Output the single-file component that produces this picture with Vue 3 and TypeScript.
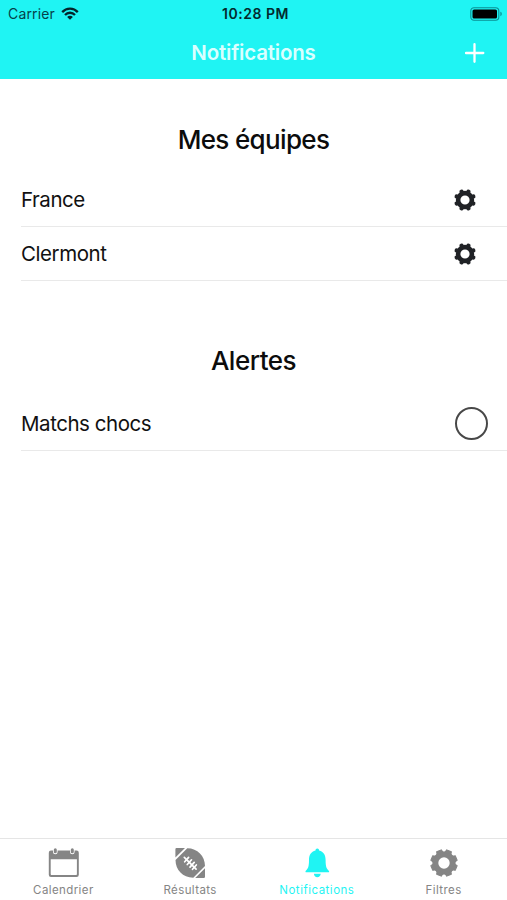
<script setup lang="ts">
interface Team { name: string }
interface Tab { id: string; label: string; active?: boolean }

const teams: Team[] = [{ name: 'France' }, { name: 'Clermont' }]
const tabs: Tab[] = [
  { id: 'calendar', label: 'Calendrier' },
  { id: 'results', label: 'Résultats' },
  { id: 'notifications', label: 'Notifications', active: true },
  { id: 'filters', label: 'Filtres' },
]
const teeth: number[] = [22.5, 67.5, 112.5, 157.5, 202.5, 247.5, 292.5, 337.5]
</script>

<template>
  <div class="screen">
    <header class="header">
      <div class="status">
        <div class="carrier">
          <span class="carrier-name">Carrier</span>
          <svg class="wifi" width="18" height="13" viewBox="0 0 18 13" fill="none" stroke="#03252b" stroke-width="2.3">
            <path d="M1.2 5.1C5.5.5 12.5.5 16.8 5.1" />
            <path d="M4 8c2.8-3 7.2-3 10 0" />
            <path d="M6.1 9.9c1.6-1.7 4.2-1.7 5.8 0L9 12.8z" fill="#03252b" stroke="none" />
          </svg>
        </div>
        <span class="time">10:28 PM</span>
        <svg class="battery" width="33" height="14" viewBox="0 0 33 14">
          <rect x=".8" y=".8" width="28" height="12.4" rx="3.2" fill="none" stroke="#0b8f94" stroke-width="1.1" />
          <rect x="2.5" y="2.5" width="24.5" height="9" rx="1.6" fill="#000" />
          <path d="M30.4 4.8c1.8.5 1.8 3.9 0 4.4z" fill="#0b8f94" />
        </svg>
      </div>
      <div class="navbar">
        <h1 class="title">Notifications</h1>
        <svg class="plus" width="20" height="20" viewBox="0 0 20 20" stroke="#fff" stroke-width="2.3" stroke-linecap="round">
          <path d="M9.500 1.200v17.600M.9 10h17.400" />
        </svg>
      </div>
    </header>

    <main class="content">
      <section class="group">
        <h2 class="heading teams-heading">Mes équipes</h2>
        <div v-for="team in teams" :key="team.name" class="row">
          <span class="label">{{ team.name }}</span>
          <svg class="gear" width="24" height="24" viewBox="-12 -12 24 24" stroke="#202226" fill="none">
            <circle r="6.9" stroke-width="4.6" />
            <path v-for="angle in teeth" :key="angle" d="M0-7.500v-1.500" :transform="`rotate(${angle})`" stroke-width="4.300" stroke-linecap="round" />
          </svg>
        </div>
      </section>
      <section class="group alerts">
        <h2 class="heading alerts-heading">Alertes</h2>
        <div class="row">
          <span class="label matchs">Matchs chocs</span>
          <span class="radio"></span>
        </div>
      </section>
    </main>

    <nav class="tabs">
      <div v-for="tab in tabs" :key="tab.id" class="tab" :class="[tab.id, { active: tab.active }]">
        <svg v-if="tab.id === 'calendar'" class="icon" width="32" height="32" viewBox="-.8 0 32 32">
          <path fill="currentColor" fill-rule="evenodd" d="M3.200 3.500h25.600q2.200 0 2.200 2.200v22.100q0 2.200-2.200 2.200H3.200Q1 30 1 27.800V5.700Q1 3.500 3.200 3.500zM2.900 12.300v14.600q0 1.200 1.200 1.200h23.800q1.200 0 1.200-1.200V12.300z" />
          <g stroke-linecap="round">
            <path d="M7.500 3.500v1.500M24.500 3.500v1.500" stroke="#fff" stroke-width="4.600" />
            <path d="M7.500 2.700v2M24.500 2.700v2" stroke="currentColor" stroke-width="3" />
          </g>
        </svg>
        <svg v-else-if="tab.id === 'results'" class="icon" width="32" height="32" viewBox="0 0 32 32">
          <path fill="currentColor" d="M2.500 1H11L1.400 10.600V2.200Q1.400 1 2.500 1zM13.300 1.200C23.500 1.200 31 9 31 19L19.300 30.700C9 30.800 1.500 23 1.500 13zM31 21.200v8.600q0 1.200-1.200 1.200h-8.600z" />
          <g stroke="#fff" stroke-width="1.700" stroke-linecap="round">
            <path d="M10.300 10.300l11.800 11.800" />
            <path d="M10.700 14.800l3.900-4.400M13.300 17.500l4.200-4.700M16 20.100l4.200-4.700M18.500 22.300l3.800-4.300" />
          </g>
        </svg>
        <svg v-else-if="tab.id === 'notifications'" class="icon" width="32" height="32" viewBox="0 0 32 32" fill="currentColor">
          <path d="M16.300 1.500c1.100 0 1.800.8 1.800 2 4.400 1 6.500 4.600 6.500 9.500 0 7 1 8.500 3.200 10.700.7.900.4 1.600-.7 1.600H5.500c-1.100 0-1.400-.7-.7-1.600C7 21.500 8 20 8 13c0-4.900 2.100-8.500 6.500-9.500 0-1.200.7-2 1.800-2z" />
          <path d="M12.900 26.700h6.800c-.2 2.100-1.500 3.600-3.400 3.600s-3.200-1.500-3.400-3.600z" />
        </svg>
        <svg v-else class="icon" width="32" height="32" viewBox="-16 -16 32 32" stroke="currentColor" fill="none">
          <circle r="8.600" stroke-width="5.800" />
          <path v-for="angle in teeth" :key="angle" fill="currentColor" d="M-3.700-10Q-2.800-11-2.500-13.200h5Q2.800-11 3.700-10z" :transform="`rotate(${angle})`" stroke-width="1" stroke-linejoin="round" />
        </svg>
        <span class="tab-label">{{ tab.label }}</span>
      </div>
    </nav>
  </div>
</template>

<style>
body { margin: 0; background: #fff; }
</style>

<style scoped>
.screen {
  display: flex;
  flex-direction: column;
  width: 507px;
  height: 900px;
  overflow: hidden;
  background: #fff;
  color: #111;
  font-family: Inter, "Liberation Sans", sans-serif;
}
.header { height: 79px; background: #1ff4f3; }
.status {
  display: grid;
  grid-template-columns: 1fr auto 1fr;
  align-items: center;
  box-sizing: border-box;
  height: 27px;
  padding: 0 4px 0 8px;
}
.carrier { display: flex; align-items: center; gap: 6px; }
.carrier-name { font-size: 14px; line-height: 18px; color: #06414a; letter-spacing: .15px; }
.time { font-size: 14px; font-weight: 600; line-height: 18px; color: #032a2e; letter-spacing: .5px; }
.battery { justify-self: end; }
.navbar {
  display: grid;
  grid-template-columns: 1fr auto 1fr;
  align-items: center;
  height: 52px;
  padding-right: 22px;
  padding-left: 22px;
}
.title { grid-column: 2; margin: 0; color: #d9ffff; font-size: 20.500px; font-weight: 600; line-height: 30px; letter-spacing: -.2px; }
.plus { justify-self: end; }
.content { flex: 1; }
.group { padding-top: 42px; }
.alerts { padding-top: 61px; }
.heading {
  margin: 0 0 14px;
  text-align: center;
  font-size: 26px;
  line-height: 38px;
  font-weight: 500;
  letter-spacing: -.65px;
  color: #0c0c0c;
}
.alerts-heading { margin-bottom: 17px; letter-spacing: -.5px; }
.row {
  display: flex;
  align-items: center;
  justify-content: space-between;
  box-sizing: border-box;
  height: 54px;
  margin-left: 21px;
  padding-right: 30px;
  border-bottom: 1px solid #e9e9e9;
}
.label { font-size: 20.500px; line-height: 28px; letter-spacing: -.45px; }
.alerts .row { padding-right: 19px; }
.radio { box-sizing: border-box; width: 33px; height: 33px; border: 2px solid #484848; border-radius: 50%; }
.tabs {
  display: grid;
  grid-template-columns: repeat(4, 1fr);
  box-sizing: border-box;
  height: 62px;
  border-top: 1px solid #e5e5e5;
}
.tab { display: flex; flex-direction: column; align-items: center; padding-top: 8px; color: #858585; }
.tab.active { color: #1ff4f3; }
.tab-label { margin-top: 3px; font-size: 11.500px; line-height: 16px; letter-spacing: .4px; }
.active .tab-label { letter-spacing: .5px; }
</style>
